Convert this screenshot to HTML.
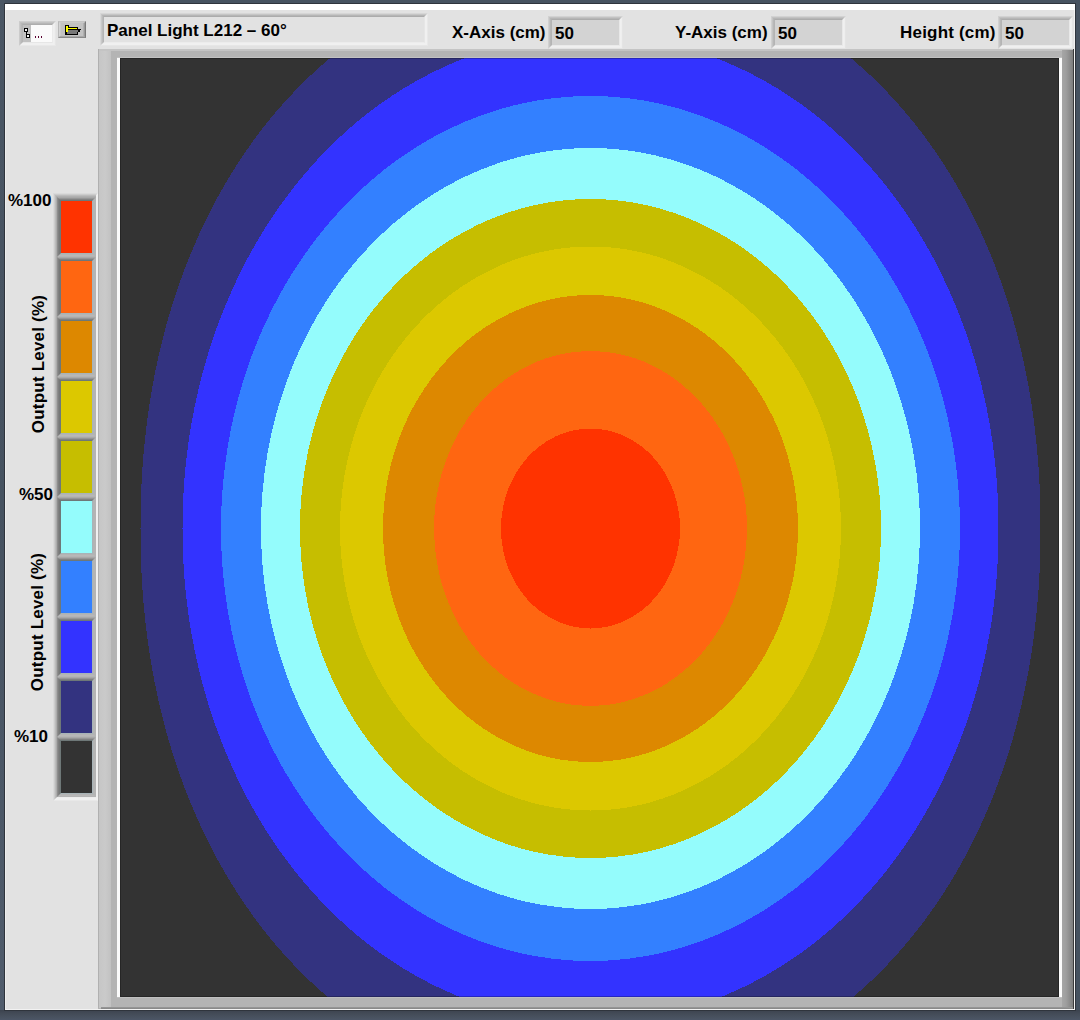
<!DOCTYPE html>
<html><head><meta charset="utf-8">
<style>
html,body{margin:0;padding:0;}
body{width:1080px;height:1020px;position:relative;overflow:hidden;background:#465260;font-family:"Liberation Sans",sans-serif;}
.a{position:absolute;}
.t{position:absolute;font-weight:bold;font-size:17px;line-height:20px;white-space:nowrap;color:#000;}
</style></head><body>
<div class="a" style="left:0;top:0;width:1080px;height:1020px;background:#465260;"></div>
<div class="a" style="left:0;top:1010px;width:1080px;height:10px;background:linear-gradient(180deg,#3c434e 0,#444c58 4px,#4c5666 10px);"></div>
<div class="a" style="left:0;top:0;width:5px;height:1010px;background:linear-gradient(180deg,#4a5664 0,#465260 50%,#505c6c 100%);"></div>
<div class="a" style="left:4px;top:3px;width:1072px;height:1008px;background:#2f343c;"></div>
<div class="a" style="left:5px;top:4px;width:1070px;height:1006px;background:#e2e2e2;"></div>
<div class="a" style="left:5px;top:4px;width:1070px;height:6px;background:#ffffff;"></div>
<div class="a" style="left:5px;top:10px;width:1px;height:999px;background:#ededed;"></div>
<div class="a" style="left:5px;top:1009px;width:1070px;height:1px;background:#f2f2f2;"></div>
<div class="a" style="box-sizing:border-box;left:19px;top:21px;width:37px;height:25px;border-top:1px solid #cdcdcd;border-left:1px solid #cbcbcb;border-right:1px solid #e6e6e6;border-bottom:1px solid #e8e8e8;"></div>
<div class="a" style="box-sizing:border-box;left:20px;top:22px;width:35px;height:23px;border-top:1px solid #c2c2c2;border-left:1px solid #c0c0c0;border-right:1px solid #eeeeee;border-bottom:1px solid #f0f0f0;"></div>
<div class="a" style="box-sizing:border-box;left:21px;top:23px;width:33px;height:21px;border-top:1px solid #b6b6b6;border-left:1px solid #b8b8b8;border-right:1px solid #f0f0f0;border-bottom:1px solid #f0f0f0;"></div>
<div class="a" style="box-sizing:border-box;left:22px;top:24px;width:31px;height:19px;border-top:1px solid #adadad;border-left:1px solid #b4b4b4;border-right:1px solid #ebebeb;border-bottom:1px solid #e6e6e6;"></div>
<div class="a" style="left:23px;top:25px;width:29px;height:17px;background:#fafafa;"></div>
<div class="a" style="left:23px;top:25px;width:8px;height:17px;background:#c0c0c0;"></div>
<svg class="a" style="left:0;top:0" width="100" height="60" viewBox="0 0 100 60" shape-rendering="crispEdges">
 <rect x="24.5" y="28.5" width="3" height="3" fill="#f4f4f4" stroke="#000" stroke-width="1"/>
 <rect x="26.5" y="34.5" width="3" height="3" fill="#f4f4f4" stroke="#000" stroke-width="1"/>
 <rect x="26" y="32" width="1" height="2" fill="#000"/>
 <rect x="35" y="36" width="1" height="2" fill="#5a0030"/>
 <rect x="38" y="36" width="1" height="2" fill="#5a0030"/>
 <rect x="41" y="36" width="1" height="2" fill="#5a0030"/>
</svg>
<div class="a" style="box-sizing:border-box;left:58px;top:21px;width:28px;height:17px;border-top:1px solid #c4c4c4;border-left:1px solid #b8b8b8;border-right:1px solid #7a7a7a;border-bottom:1px solid #8a8a8a;"></div>
<div class="a" style="box-sizing:border-box;left:59px;top:22px;width:26px;height:15px;border-top:1px solid #c8c8c8;border-left:1px solid #d4d4d4;border-right:1px solid #9a9a9a;border-bottom:1px solid #a8a8a8;"></div>
<div class="a" style="box-sizing:border-box;left:60px;top:23px;width:24px;height:13px;border-top:0 solid transparent;border-left:1px solid #cacaca;border-right:1px solid #b0b0b0;border-bottom:0 solid transparent;"></div>
<div class="a" style="left:61px;top:23px;width:22px;height:13px;background:#c2c2c2;"></div>
<svg class="a" style="left:0;top:0" width="100" height="60" viewBox="0 0 100 60" shape-rendering="crispEdges">
<rect x="65" y="25" width="4" height="1" fill="#000"/>
<rect x="65" y="26" width="1" height="1" fill="#000"/>
<rect x="66" y="26" width="2" height="1" fill="#ffff00"/>
<rect x="68" y="26" width="1" height="1" fill="#000"/>
<rect x="65" y="27" width="1" height="1" fill="#000"/>
<rect x="66" y="27" width="2" height="1" fill="#ffff00"/>
<rect x="68" y="27" width="10" height="1" fill="#000"/>
<rect x="65" y="28" width="1" height="1" fill="#000"/>
<rect x="66" y="28" width="11" height="1" fill="#ffff00"/>
<rect x="77" y="28" width="1" height="1" fill="#000"/>
<rect x="65" y="29" width="1" height="1" fill="#000"/>
<rect x="66" y="29" width="2" height="1" fill="#ffff00"/>
<rect x="68" y="29" width="13" height="1" fill="#000"/>
<rect x="65" y="30" width="1" height="1" fill="#000"/>
<rect x="66" y="30" width="2" height="1" fill="#ffff00"/>
<rect x="68" y="30" width="10" height="1" fill="#787878"/>
<rect x="78" y="30" width="2" height="1" fill="#000"/>
<rect x="65" y="31" width="1" height="1" fill="#000"/>
<rect x="66" y="31" width="2" height="1" fill="#ffff00"/>
<rect x="68" y="31" width="10" height="1" fill="#787878"/>
<rect x="78" y="31" width="2" height="1" fill="#000"/>
<rect x="65" y="32" width="2" height="1" fill="#000"/>
<rect x="67" y="32" width="10" height="1" fill="#787878"/>
<rect x="77" y="32" width="1" height="1" fill="#000"/>
<rect x="65" y="33" width="2" height="1" fill="#000"/>
<rect x="67" y="33" width="10" height="1" fill="#787878"/>
<rect x="77" y="33" width="1" height="1" fill="#000"/>
<rect x="65" y="34" width="13" height="1" fill="#000"/>
</svg>
<div class="a" style="box-sizing:border-box;left:100px;top:13px;width:328px;height:33px;border-top:1px solid #d6d6d6;border-left:1px solid #d8d8d8;border-right:1px solid #e8e8e8;border-bottom:1px solid #e6e6e6;"></div>
<div class="a" style="box-sizing:border-box;left:101px;top:14px;width:326px;height:31px;border-top:1px solid #c6c6c6;border-left:1px solid #c8c8c8;border-right:1px solid #f0f0f0;border-bottom:1px solid #f0f0f0;"></div>
<div class="a" style="box-sizing:border-box;left:102px;top:15px;width:324px;height:29px;border-top:1px solid #b6b6b6;border-left:1px solid #bcbcbc;border-right:1px solid #f0f0f0;border-bottom:1px solid #f0f0f0;"></div>
<div class="a" style="box-sizing:border-box;left:103px;top:16px;width:322px;height:27px;border-top:1px solid #acacac;border-left:1px solid #b4b4b4;border-right:1px solid #e6e6e6;border-bottom:1px solid #ececec;"></div>
<div class="a" style="left:104px;top:17px;width:320px;height:25px;background:#e2e2e2;"></div>
<div class="t" style="left:107px;top:21px;">Panel Light L212 – 60°</div>
<div class="t" style="left:452px;top:23px;">X-Axis (cm)</div>
<div class="a" style="box-sizing:border-box;left:548px;top:16px;width:75px;height:33px;border-top:1px solid #d2d2d2;border-left:1px solid #d0d0d0;border-right:1px solid #e4e4e4;border-bottom:1px solid #e4e4e4;"></div>
<div class="a" style="box-sizing:border-box;left:549px;top:17px;width:73px;height:31px;border-top:1px solid #c2c2c2;border-left:1px solid #c4c4c4;border-right:1px solid #eeeeee;border-bottom:1px solid #eeeeee;"></div>
<div class="a" style="box-sizing:border-box;left:550px;top:18px;width:71px;height:29px;border-top:1px solid #b6b6b6;border-left:1px solid #b8b8b8;border-right:1px solid #f0f0f0;border-bottom:1px solid #f0f0f0;"></div>
<div class="a" style="box-sizing:border-box;left:551px;top:19px;width:69px;height:27px;border-top:1px solid #acacac;border-left:1px solid #b4b4b4;border-right:1px solid #e8e8e8;border-bottom:1px solid #eaeaea;"></div>
<div class="a" style="left:552px;top:20px;width:67px;height:25px;background:#d3d3d3;"></div>
<div class="t" style="left:555px;top:24px;">50</div>
<div class="t" style="left:675px;top:23px;">Y-Axis (cm)</div>
<div class="a" style="box-sizing:border-box;left:771px;top:16px;width:75px;height:33px;border-top:1px solid #d2d2d2;border-left:1px solid #d0d0d0;border-right:1px solid #e4e4e4;border-bottom:1px solid #e4e4e4;"></div>
<div class="a" style="box-sizing:border-box;left:772px;top:17px;width:73px;height:31px;border-top:1px solid #c2c2c2;border-left:1px solid #c4c4c4;border-right:1px solid #eeeeee;border-bottom:1px solid #eeeeee;"></div>
<div class="a" style="box-sizing:border-box;left:773px;top:18px;width:71px;height:29px;border-top:1px solid #b6b6b6;border-left:1px solid #b8b8b8;border-right:1px solid #f0f0f0;border-bottom:1px solid #f0f0f0;"></div>
<div class="a" style="box-sizing:border-box;left:774px;top:19px;width:69px;height:27px;border-top:1px solid #acacac;border-left:1px solid #b4b4b4;border-right:1px solid #e8e8e8;border-bottom:1px solid #eaeaea;"></div>
<div class="a" style="left:775px;top:20px;width:67px;height:25px;background:#d3d3d3;"></div>
<div class="t" style="left:778px;top:24px;">50</div>
<div class="t" style="left:900px;top:23px;letter-spacing:0.2px;">Height (cm)</div>
<div class="a" style="box-sizing:border-box;left:998px;top:16px;width:75px;height:33px;border-top:1px solid #d2d2d2;border-left:1px solid #d0d0d0;border-right:1px solid #e4e4e4;border-bottom:1px solid #e4e4e4;"></div>
<div class="a" style="box-sizing:border-box;left:999px;top:17px;width:73px;height:31px;border-top:1px solid #c2c2c2;border-left:1px solid #c4c4c4;border-right:1px solid #eeeeee;border-bottom:1px solid #eeeeee;"></div>
<div class="a" style="box-sizing:border-box;left:1000px;top:18px;width:71px;height:29px;border-top:1px solid #b6b6b6;border-left:1px solid #b8b8b8;border-right:1px solid #f0f0f0;border-bottom:1px solid #f0f0f0;"></div>
<div class="a" style="box-sizing:border-box;left:1001px;top:19px;width:69px;height:27px;border-top:1px solid #acacac;border-left:1px solid #b4b4b4;border-right:1px solid #e8e8e8;border-bottom:1px solid #eaeaea;"></div>
<div class="a" style="left:1002px;top:20px;width:67px;height:25px;background:#d3d3d3;"></div>
<div class="t" style="left:1005px;top:24px;">50</div>
<div class="a" style="left:98px;top:49px;width:976px;height:960px;background:#b4b4b4;"></div>
<div class="a" style="left:98px;top:49px;width:975px;height:2px;background:#c4c4c4;"></div>
<div class="a" style="left:98px;top:49px;width:1px;height:959px;background:#b0b0b0;"></div>
<div class="a" style="left:99px;top:51px;width:12px;height:957px;background:linear-gradient(90deg,#c6c6c6 0,#cacaca 6px,#c2c2c2 12px);"></div>
<div class="a" style="left:1062px;top:50px;width:11px;height:958px;background:linear-gradient(90deg,#a6a6a6 0,#9e9e9e 4px,#7e7e7e 11px);"></div>
<div class="a" style="left:1073px;top:49px;width:1px;height:960px;background:#3c3c3c;"></div>
<div class="a" style="left:1074px;top:10px;width:1px;height:1000px;background:#f2f2f2;"></div>
<div class="a" style="left:101px;top:1007px;width:972px;height:2px;background:linear-gradient(180deg,#9a9a9a,#848484);"></div>
<div class="a" style="left:117px;top:58px;width:3px;height:939px;background:#fbfbfb;"></div>
<div class="a" style="left:1059px;top:58px;width:3px;height:939px;background:#fbfbfb;"></div>
<svg class="a" style="left:120px;top:58px" width="939" height="939" viewBox="120 58 939 939" shape-rendering="crispEdges">
<rect x="120" y="58" width="939" height="939" fill="#333333"/>
<path d="M1040.5,528.5 L1040.4,540.5 L1040.2,551.7 L1039.9,562.7 L1039.5,573.4 L1038.9,584.0 L1038.2,594.4 L1037.3,604.8 L1036.3,615.0 L1035.2,625.2 L1034.0,635.3 L1032.6,645.3 L1031.2,655.2 L1029.5,665.1 L1027.8,674.8 L1025.9,684.5 L1023.9,694.1 L1021.8,703.7 L1019.5,713.1 L1017.2,722.5 L1014.7,731.8 L1012.1,741.0 L1009.3,750.2 L1006.4,759.2 L1003.5,768.2 L1000.3,777.1 L997.1,785.9 L993.8,794.6 L990.3,803.2 L986.7,811.7 L983.0,820.2 L979.2,828.5 L975.3,836.7 L971.2,844.8 L967.1,852.9 L962.8,860.8 L958.4,868.6 L953.9,876.3 L949.3,883.9 L944.6,891.4 L939.8,898.8 L934.9,906.0 L929.9,913.2 L924.8,920.2 L919.6,927.1 L914.2,933.9 L908.8,940.6 L903.3,947.1 L897.7,953.5 L892.0,959.8 L886.2,965.9 L880.3,972.0 L874.3,977.9 L868.3,983.6 L862.1,989.2 L855.9,994.7 L849.5,1000.1 L843.1,1005.3 L836.6,1010.3 L830.1,1015.2 L823.4,1020.0 L816.7,1024.7 L809.9,1029.1 L803.0,1033.5 L796.1,1037.7 L789.0,1041.7 L781.9,1045.6 L774.8,1049.4 L767.5,1052.9 L760.2,1056.4 L752.9,1059.7 L745.4,1062.8 L737.9,1065.8 L730.4,1068.6 L722.8,1071.2 L715.1,1073.7 L707.4,1076.1 L699.5,1078.3 L691.7,1080.3 L683.8,1082.2 L675.8,1083.9 L667.7,1085.4 L659.6,1086.8 L651.4,1088.0 L643.1,1089.1 L634.8,1090.0 L626.3,1090.7 L617.8,1091.3 L609.1,1091.7 L600.1,1091.9 L590.5,1092.0 L580.9,1091.9 L571.9,1091.7 L563.2,1091.3 L554.7,1090.7 L546.2,1090.0 L537.9,1089.1 L529.6,1088.0 L521.4,1086.8 L513.3,1085.4 L505.2,1083.9 L497.2,1082.2 L489.3,1080.3 L481.5,1078.3 L473.6,1076.1 L465.9,1073.7 L458.2,1071.2 L450.6,1068.6 L443.1,1065.8 L435.6,1062.8 L428.1,1059.7 L420.8,1056.4 L413.5,1052.9 L406.2,1049.4 L399.1,1045.6 L392.0,1041.7 L384.9,1037.7 L378.0,1033.5 L371.1,1029.1 L364.3,1024.7 L357.6,1020.0 L350.9,1015.2 L344.4,1010.3 L337.9,1005.3 L331.5,1000.1 L325.1,994.7 L318.9,989.2 L312.7,983.6 L306.7,977.9 L300.7,972.0 L294.8,965.9 L289.0,959.8 L283.3,953.5 L277.7,947.1 L272.2,940.6 L266.8,933.9 L261.4,927.1 L256.2,920.2 L251.1,913.2 L246.1,906.0 L241.2,898.8 L236.4,891.4 L231.7,883.9 L227.1,876.3 L222.6,868.6 L218.2,860.8 L213.9,852.9 L209.8,844.8 L205.7,836.7 L201.8,828.5 L198.0,820.2 L194.3,811.7 L190.7,803.2 L187.2,794.6 L183.9,785.9 L180.7,777.1 L177.5,768.2 L174.6,759.2 L171.7,750.2 L168.9,741.0 L166.3,731.8 L163.8,722.5 L161.5,713.1 L159.2,703.7 L157.1,694.1 L155.1,684.5 L153.2,674.8 L151.5,665.1 L149.8,655.2 L148.4,645.3 L147.0,635.3 L145.8,625.2 L144.7,615.0 L143.7,604.8 L142.8,594.4 L142.1,584.0 L141.5,573.4 L141.1,562.7 L140.8,551.7 L140.6,540.5 L140.5,528.5 L140.6,516.5 L140.8,505.3 L141.1,494.3 L141.5,483.6 L142.1,473.0 L142.8,462.6 L143.7,452.2 L144.7,442.0 L145.8,431.8 L147.0,421.7 L148.4,411.7 L149.8,401.8 L151.5,391.9 L153.2,382.2 L155.1,372.5 L157.1,362.9 L159.2,353.3 L161.5,343.9 L163.8,334.5 L166.3,325.2 L168.9,316.0 L171.7,306.8 L174.6,297.8 L177.5,288.8 L180.7,279.9 L183.9,271.1 L187.2,262.4 L190.7,253.8 L194.3,245.3 L198.0,236.8 L201.8,228.5 L205.7,220.3 L209.8,212.2 L213.9,204.1 L218.2,196.2 L222.6,188.4 L227.1,180.7 L231.7,173.1 L236.4,165.6 L241.2,158.2 L246.1,151.0 L251.1,143.8 L256.2,136.8 L261.4,129.9 L266.8,123.1 L272.2,116.4 L277.7,109.9 L283.3,103.5 L289.0,97.2 L294.8,91.1 L300.7,85.0 L306.7,79.1 L312.7,73.4 L318.9,67.8 L325.1,62.3 L331.5,56.9 L337.9,51.7 L344.4,46.7 L350.9,41.8 L357.6,37.0 L364.3,32.3 L371.1,27.9 L378.0,23.5 L384.9,19.3 L392.0,15.3 L399.1,11.4 L406.2,7.6 L413.5,4.1 L420.8,0.6 L428.1,-2.7 L435.6,-5.8 L443.1,-8.8 L450.6,-11.6 L458.2,-14.2 L465.9,-16.7 L473.6,-19.1 L481.5,-21.3 L489.3,-23.3 L497.2,-25.2 L505.2,-26.9 L513.3,-28.4 L521.4,-29.8 L529.6,-31.0 L537.9,-32.1 L546.2,-33.0 L554.7,-33.7 L563.2,-34.3 L571.9,-34.7 L580.9,-34.9 L590.5,-35.0 L600.1,-34.9 L609.1,-34.7 L617.8,-34.3 L626.3,-33.7 L634.8,-33.0 L643.1,-32.1 L651.4,-31.0 L659.6,-29.8 L667.7,-28.4 L675.8,-26.9 L683.8,-25.2 L691.7,-23.3 L699.5,-21.3 L707.4,-19.1 L715.1,-16.7 L722.8,-14.2 L730.4,-11.6 L737.9,-8.8 L745.4,-5.8 L752.9,-2.7 L760.2,0.6 L767.5,4.1 L774.8,7.6 L781.9,11.4 L789.0,15.3 L796.1,19.3 L803.0,23.5 L809.9,27.9 L816.7,32.3 L823.4,37.0 L830.1,41.8 L836.6,46.7 L843.1,51.7 L849.5,56.9 L855.9,62.3 L862.1,67.8 L868.3,73.4 L874.3,79.1 L880.3,85.0 L886.2,91.1 L892.0,97.2 L897.7,103.5 L903.3,109.9 L908.8,116.4 L914.2,123.1 L919.6,129.9 L924.8,136.8 L929.9,143.8 L934.9,151.0 L939.8,158.2 L944.6,165.6 L949.3,173.1 L953.9,180.7 L958.4,188.4 L962.8,196.2 L967.1,204.1 L971.2,212.2 L975.3,220.3 L979.2,228.5 L983.0,236.8 L986.7,245.3 L990.3,253.8 L993.8,262.4 L997.1,271.1 L1000.3,279.9 L1003.5,288.8 L1006.4,297.8 L1009.3,306.8 L1012.1,316.0 L1014.7,325.2 L1017.2,334.5 L1019.5,343.9 L1021.8,353.3 L1023.9,362.9 L1025.9,372.5 L1027.8,382.2 L1029.5,391.9 L1031.2,401.8 L1032.6,411.7 L1034.0,421.7 L1035.2,431.8 L1036.3,442.0 L1037.3,452.2 L1038.2,462.6 L1038.9,473.0 L1039.5,483.6 L1039.9,494.3 L1040.2,505.3 L1040.4,516.5Z" fill="#333380"/>
<path d="M998.5,528.5 L998.4,537.5 L998.3,546.3 L997.9,555.1 L997.5,563.8 L997.0,572.6 L996.3,581.3 L995.5,589.9 L994.6,598.5 L993.5,607.1 L992.4,615.7 L991.1,624.2 L989.7,632.7 L988.1,641.2 L986.5,649.6 L984.7,657.9 L982.8,666.3 L980.8,674.6 L978.7,682.8 L976.5,691.0 L974.1,699.1 L971.7,707.2 L969.1,715.2 L966.4,723.1 L963.6,731.0 L960.6,738.8 L957.6,746.6 L954.4,754.3 L951.2,761.9 L947.8,769.5 L944.3,776.9 L940.8,784.3 L937.1,791.7 L933.3,798.9 L929.4,806.1 L925.4,813.1 L921.3,820.1 L917.1,827.0 L912.8,833.8 L908.4,840.5 L903.9,847.1 L899.3,853.6 L894.6,860.0 L889.8,866.3 L884.9,872.6 L880.0,878.7 L874.9,884.7 L869.8,890.5 L864.6,896.3 L859.3,902.0 L853.9,907.5 L848.4,913.0 L842.9,918.3 L837.3,923.5 L831.6,928.6 L825.8,933.6 L820.0,938.4 L814.1,943.1 L808.1,947.7 L802.0,952.2 L795.9,956.5 L789.7,960.7 L783.5,964.8 L777.2,968.7 L770.8,972.5 L764.4,976.2 L757.9,979.7 L751.4,983.1 L744.8,986.4 L738.2,989.5 L731.5,992.5 L724.8,995.4 L718.1,998.1 L711.2,1000.6 L704.4,1003.1 L697.5,1005.3 L690.6,1007.5 L683.6,1009.5 L676.7,1011.3 L669.6,1013.0 L662.6,1014.6 L655.5,1016.0 L648.4,1017.2 L641.3,1018.4 L634.1,1019.3 L626.9,1020.1 L619.7,1020.8 L612.5,1021.3 L605.2,1021.7 L597.9,1021.9 L590.5,1022.0 L583.1,1021.9 L575.8,1021.7 L568.5,1021.3 L561.3,1020.8 L554.1,1020.1 L546.9,1019.3 L539.7,1018.4 L532.6,1017.2 L525.5,1016.0 L518.4,1014.6 L511.4,1013.0 L504.3,1011.3 L497.4,1009.5 L490.4,1007.5 L483.5,1005.3 L476.6,1003.1 L469.8,1000.6 L462.9,998.1 L456.2,995.4 L449.5,992.5 L442.8,989.5 L436.2,986.4 L429.6,983.1 L423.1,979.7 L416.6,976.2 L410.2,972.5 L403.8,968.7 L397.5,964.8 L391.3,960.7 L385.1,956.5 L379.0,952.2 L372.9,947.7 L366.9,943.1 L361.0,938.4 L355.2,933.6 L349.4,928.6 L343.7,923.5 L338.1,918.3 L332.6,913.0 L327.1,907.5 L321.7,902.0 L316.4,896.3 L311.2,890.5 L306.1,884.7 L301.0,878.7 L296.1,872.6 L291.2,866.3 L286.4,860.0 L281.7,853.6 L277.1,847.1 L272.6,840.5 L268.2,833.8 L263.9,827.0 L259.7,820.1 L255.6,813.1 L251.6,806.1 L247.7,798.9 L243.9,791.7 L240.2,784.3 L236.7,776.9 L233.2,769.5 L229.8,761.9 L226.6,754.3 L223.4,746.6 L220.4,738.8 L217.4,731.0 L214.6,723.1 L211.9,715.2 L209.3,707.2 L206.9,699.1 L204.5,691.0 L202.3,682.8 L200.2,674.6 L198.2,666.3 L196.3,657.9 L194.5,649.6 L192.9,641.2 L191.3,632.7 L189.9,624.2 L188.6,615.7 L187.5,607.1 L186.4,598.5 L185.5,589.9 L184.7,581.3 L184.0,572.6 L183.5,563.8 L183.1,555.1 L182.7,546.3 L182.6,537.5 L182.5,528.5 L182.6,519.5 L182.7,510.7 L183.1,501.9 L183.5,493.2 L184.0,484.4 L184.7,475.7 L185.5,467.1 L186.4,458.5 L187.5,449.9 L188.6,441.3 L189.9,432.8 L191.3,424.3 L192.9,415.8 L194.5,407.4 L196.3,399.1 L198.2,390.7 L200.2,382.4 L202.3,374.2 L204.5,366.0 L206.9,357.9 L209.3,349.8 L211.9,341.8 L214.6,333.9 L217.4,326.0 L220.4,318.2 L223.4,310.4 L226.6,302.7 L229.8,295.1 L233.2,287.5 L236.7,280.1 L240.2,272.7 L243.9,265.3 L247.7,258.1 L251.6,250.9 L255.6,243.9 L259.7,236.9 L263.9,230.0 L268.2,223.2 L272.6,216.5 L277.1,209.9 L281.7,203.4 L286.4,197.0 L291.2,190.7 L296.1,184.4 L301.0,178.3 L306.1,172.3 L311.2,166.5 L316.4,160.7 L321.7,155.0 L327.1,149.5 L332.6,144.0 L338.1,138.7 L343.7,133.5 L349.4,128.4 L355.2,123.4 L361.0,118.6 L366.9,113.9 L372.9,109.3 L379.0,104.8 L385.1,100.5 L391.3,96.3 L397.5,92.2 L403.8,88.3 L410.2,84.5 L416.6,80.8 L423.1,77.3 L429.6,73.9 L436.2,70.6 L442.8,67.5 L449.5,64.5 L456.2,61.6 L462.9,58.9 L469.8,56.4 L476.6,53.9 L483.5,51.7 L490.4,49.5 L497.4,47.5 L504.3,45.7 L511.4,44.0 L518.4,42.4 L525.5,41.0 L532.6,39.8 L539.7,38.6 L546.9,37.7 L554.1,36.9 L561.3,36.2 L568.5,35.7 L575.8,35.3 L583.1,35.1 L590.5,35.0 L597.9,35.1 L605.2,35.3 L612.5,35.7 L619.7,36.2 L626.9,36.9 L634.1,37.7 L641.3,38.6 L648.4,39.8 L655.5,41.0 L662.6,42.4 L669.6,44.0 L676.7,45.7 L683.6,47.5 L690.6,49.5 L697.5,51.7 L704.4,53.9 L711.2,56.4 L718.1,58.9 L724.8,61.6 L731.5,64.5 L738.2,67.5 L744.8,70.6 L751.4,73.9 L757.9,77.3 L764.4,80.8 L770.8,84.5 L777.2,88.3 L783.5,92.2 L789.7,96.3 L795.9,100.5 L802.0,104.8 L808.1,109.3 L814.1,113.9 L820.0,118.6 L825.8,123.4 L831.6,128.4 L837.3,133.5 L842.9,138.7 L848.4,144.0 L853.9,149.5 L859.3,155.0 L864.6,160.7 L869.8,166.5 L874.9,172.3 L880.0,178.3 L884.9,184.4 L889.8,190.7 L894.6,197.0 L899.3,203.4 L903.9,209.9 L908.4,216.5 L912.8,223.2 L917.1,230.0 L921.3,236.9 L925.4,243.9 L929.4,250.9 L933.3,258.1 L937.1,265.3 L940.8,272.7 L944.3,280.1 L947.8,287.5 L951.2,295.1 L954.4,302.7 L957.6,310.4 L960.6,318.2 L963.6,326.0 L966.4,333.9 L969.1,341.8 L971.7,349.8 L974.1,357.9 L976.5,366.0 L978.7,374.2 L980.8,382.4 L982.8,390.7 L984.7,399.1 L986.5,407.4 L988.1,415.8 L989.7,424.3 L991.1,432.8 L992.4,441.3 L993.5,449.9 L994.6,458.5 L995.5,467.1 L996.3,475.7 L997.0,484.4 L997.5,493.2 L997.9,501.9 L998.3,510.7 L998.4,519.5Z" fill="#3333ff"/>
<ellipse cx="590.5" cy="528.5" rx="369.5" ry="432.5" fill="#3380ff"/>
<ellipse cx="590.5" cy="528.5" rx="329.5" ry="380.5" fill="#94fcfc"/>
<ellipse cx="590.5" cy="528.5" rx="290.5" ry="329.5" fill="#c6be00"/>
<ellipse cx="590.5" cy="528.5" rx="250.5" ry="282.0" fill="#dcc800"/>
<ellipse cx="590.5" cy="528.5" rx="207.5" ry="233.5" fill="#dd8800"/>
<ellipse cx="590.5" cy="528.5" rx="156.5" ry="177.5" fill="#ff6611"/>
<ellipse cx="590.5" cy="528.5" rx="89.5" ry="100.0" fill="#ff3300"/>
</svg>
<div class="a" style="box-sizing:border-box;left:120px;top:58px;width:939px;height:939px;border:1px solid rgba(0,0,0,0.25);"></div>
<div class="a" style="left:117px;top:57px;width:945px;height:1px;background:#c2c2c2;"></div>
<div class="a" style="left:117px;top:997px;width:945px;height:1px;background:#c0c0c0;"></div>
<div class="a" style="box-sizing:border-box;left:53px;top:193px;width:45px;height:608px;border-top:1px solid #dadada;border-left:1px solid #dadada;border-right:1px solid #f0f0f0;border-bottom:1px solid #e8e8e8;"></div>
<div class="a" style="box-sizing:border-box;left:54px;top:194px;width:43px;height:606px;border-top:1px solid #cccccc;border-left:1px solid #cccccc;border-right:1px solid #f0f0f0;border-bottom:1px solid #f0f0f0;"></div>
<div class="a" style="box-sizing:border-box;left:55px;top:195px;width:41px;height:604px;border-top:1px solid #bcbcbc;border-left:1px solid #bcbcbc;border-right:0 solid transparent;border-bottom:1px solid #f0f0f0;"></div>
<div class="a" style="box-sizing:border-box;left:56px;top:196px;width:40px;height:602px;border-top:1px solid #b0b0b0;border-left:1px solid #acacac;border-right:0 solid transparent;border-bottom:1px solid #ececec;"></div>
<div class="a" style="left:57px;top:197px;width:39px;height:600px;background:#b4b4b4;"></div>
<div class="a" style="box-sizing:border-box;left:57px;top:197px;width:39px;height:60px;border-top:1px solid #a8a8a8;border-left:1px solid #8e8e8e;border-right:1px solid #b4b4b4;border-bottom:1px solid #b4b4b4;"></div>
<div class="a" style="box-sizing:border-box;left:58px;top:198px;width:37px;height:58px;border-top:1px solid #969696;border-left:1px solid #808080;border-right:1px solid #b4b4b4;border-bottom:1px solid #b8b8b8;"></div>
<div class="a" style="box-sizing:border-box;left:59px;top:199px;width:35px;height:56px;border-top:1px solid #828282;border-left:1px solid #767878;border-right:1px solid #b2b4b4;border-bottom:1px solid #b4b4b4;"></div>
<div class="a" style="box-sizing:border-box;left:60px;top:200px;width:33px;height:54px;border-top:1px solid #6e7878;border-left:1px solid #6e7878;border-right:1px solid #a8b4b8;border-bottom:1px solid #a8b4b8;"></div>
<div class="a" style="left:61px;top:201px;width:31px;height:52px;background:#ff3300;"></div>
<div class="a" style="box-sizing:border-box;left:57px;top:257px;width:39px;height:60px;border-top:1px solid #a8a8a8;border-left:1px solid #8e8e8e;border-right:1px solid #b4b4b4;border-bottom:1px solid #b4b4b4;"></div>
<div class="a" style="box-sizing:border-box;left:58px;top:258px;width:37px;height:58px;border-top:1px solid #969696;border-left:1px solid #808080;border-right:1px solid #b4b4b4;border-bottom:1px solid #b8b8b8;"></div>
<div class="a" style="box-sizing:border-box;left:59px;top:259px;width:35px;height:56px;border-top:1px solid #828282;border-left:1px solid #767878;border-right:1px solid #b2b4b4;border-bottom:1px solid #b4b4b4;"></div>
<div class="a" style="box-sizing:border-box;left:60px;top:260px;width:33px;height:54px;border-top:1px solid #6e7878;border-left:1px solid #6e7878;border-right:1px solid #a8b4b8;border-bottom:1px solid #a8b4b8;"></div>
<div class="a" style="left:61px;top:261px;width:31px;height:52px;background:#ff6611;"></div>
<div class="a" style="box-sizing:border-box;left:57px;top:317px;width:39px;height:60px;border-top:1px solid #a8a8a8;border-left:1px solid #8e8e8e;border-right:1px solid #b4b4b4;border-bottom:1px solid #b4b4b4;"></div>
<div class="a" style="box-sizing:border-box;left:58px;top:318px;width:37px;height:58px;border-top:1px solid #969696;border-left:1px solid #808080;border-right:1px solid #b4b4b4;border-bottom:1px solid #b8b8b8;"></div>
<div class="a" style="box-sizing:border-box;left:59px;top:319px;width:35px;height:56px;border-top:1px solid #828282;border-left:1px solid #767878;border-right:1px solid #b2b4b4;border-bottom:1px solid #b4b4b4;"></div>
<div class="a" style="box-sizing:border-box;left:60px;top:320px;width:33px;height:54px;border-top:1px solid #6e7878;border-left:1px solid #6e7878;border-right:1px solid #a8b4b8;border-bottom:1px solid #a8b4b8;"></div>
<div class="a" style="left:61px;top:321px;width:31px;height:52px;background:#dd8800;"></div>
<div class="a" style="box-sizing:border-box;left:57px;top:377px;width:39px;height:60px;border-top:1px solid #a8a8a8;border-left:1px solid #8e8e8e;border-right:1px solid #b4b4b4;border-bottom:1px solid #b4b4b4;"></div>
<div class="a" style="box-sizing:border-box;left:58px;top:378px;width:37px;height:58px;border-top:1px solid #969696;border-left:1px solid #808080;border-right:1px solid #b4b4b4;border-bottom:1px solid #b8b8b8;"></div>
<div class="a" style="box-sizing:border-box;left:59px;top:379px;width:35px;height:56px;border-top:1px solid #828282;border-left:1px solid #767878;border-right:1px solid #b2b4b4;border-bottom:1px solid #b4b4b4;"></div>
<div class="a" style="box-sizing:border-box;left:60px;top:380px;width:33px;height:54px;border-top:1px solid #6e7878;border-left:1px solid #6e7878;border-right:1px solid #a8b4b8;border-bottom:1px solid #a8b4b8;"></div>
<div class="a" style="left:61px;top:381px;width:31px;height:52px;background:#dcc800;"></div>
<div class="a" style="box-sizing:border-box;left:57px;top:437px;width:39px;height:60px;border-top:1px solid #a8a8a8;border-left:1px solid #8e8e8e;border-right:1px solid #b4b4b4;border-bottom:1px solid #b4b4b4;"></div>
<div class="a" style="box-sizing:border-box;left:58px;top:438px;width:37px;height:58px;border-top:1px solid #969696;border-left:1px solid #808080;border-right:1px solid #b4b4b4;border-bottom:1px solid #b8b8b8;"></div>
<div class="a" style="box-sizing:border-box;left:59px;top:439px;width:35px;height:56px;border-top:1px solid #828282;border-left:1px solid #767878;border-right:1px solid #b2b4b4;border-bottom:1px solid #b4b4b4;"></div>
<div class="a" style="box-sizing:border-box;left:60px;top:440px;width:33px;height:54px;border-top:1px solid #6e7878;border-left:1px solid #6e7878;border-right:1px solid #a8b4b8;border-bottom:1px solid #a8b4b8;"></div>
<div class="a" style="left:61px;top:441px;width:31px;height:52px;background:#c6be00;"></div>
<div class="a" style="box-sizing:border-box;left:57px;top:497px;width:39px;height:60px;border-top:1px solid #a8a8a8;border-left:1px solid #8e8e8e;border-right:1px solid #b4b4b4;border-bottom:1px solid #b4b4b4;"></div>
<div class="a" style="box-sizing:border-box;left:58px;top:498px;width:37px;height:58px;border-top:1px solid #969696;border-left:1px solid #808080;border-right:1px solid #b4b4b4;border-bottom:1px solid #b8b8b8;"></div>
<div class="a" style="box-sizing:border-box;left:59px;top:499px;width:35px;height:56px;border-top:1px solid #828282;border-left:1px solid #767878;border-right:1px solid #b2b4b4;border-bottom:1px solid #b4b4b4;"></div>
<div class="a" style="box-sizing:border-box;left:60px;top:500px;width:33px;height:54px;border-top:1px solid #6e7878;border-left:1px solid #6e7878;border-right:1px solid #a8b4b8;border-bottom:1px solid #a8b4b8;"></div>
<div class="a" style="left:61px;top:501px;width:31px;height:52px;background:#94fcfc;"></div>
<div class="a" style="box-sizing:border-box;left:57px;top:557px;width:39px;height:60px;border-top:1px solid #a8a8a8;border-left:1px solid #8e8e8e;border-right:1px solid #b4b4b4;border-bottom:1px solid #b4b4b4;"></div>
<div class="a" style="box-sizing:border-box;left:58px;top:558px;width:37px;height:58px;border-top:1px solid #969696;border-left:1px solid #808080;border-right:1px solid #b4b4b4;border-bottom:1px solid #b8b8b8;"></div>
<div class="a" style="box-sizing:border-box;left:59px;top:559px;width:35px;height:56px;border-top:1px solid #828282;border-left:1px solid #767878;border-right:1px solid #b2b4b4;border-bottom:1px solid #b4b4b4;"></div>
<div class="a" style="box-sizing:border-box;left:60px;top:560px;width:33px;height:54px;border-top:1px solid #6e7878;border-left:1px solid #6e7878;border-right:1px solid #a8b4b8;border-bottom:1px solid #a8b4b8;"></div>
<div class="a" style="left:61px;top:561px;width:31px;height:52px;background:#3380ff;"></div>
<div class="a" style="box-sizing:border-box;left:57px;top:617px;width:39px;height:60px;border-top:1px solid #a8a8a8;border-left:1px solid #8e8e8e;border-right:1px solid #b4b4b4;border-bottom:1px solid #b4b4b4;"></div>
<div class="a" style="box-sizing:border-box;left:58px;top:618px;width:37px;height:58px;border-top:1px solid #969696;border-left:1px solid #808080;border-right:1px solid #b4b4b4;border-bottom:1px solid #b8b8b8;"></div>
<div class="a" style="box-sizing:border-box;left:59px;top:619px;width:35px;height:56px;border-top:1px solid #828282;border-left:1px solid #767878;border-right:1px solid #b2b4b4;border-bottom:1px solid #b4b4b4;"></div>
<div class="a" style="box-sizing:border-box;left:60px;top:620px;width:33px;height:54px;border-top:1px solid #6e7878;border-left:1px solid #6e7878;border-right:1px solid #a8b4b8;border-bottom:1px solid #a8b4b8;"></div>
<div class="a" style="left:61px;top:621px;width:31px;height:52px;background:#3333ff;"></div>
<div class="a" style="box-sizing:border-box;left:57px;top:677px;width:39px;height:60px;border-top:1px solid #a8a8a8;border-left:1px solid #8e8e8e;border-right:1px solid #b4b4b4;border-bottom:1px solid #b4b4b4;"></div>
<div class="a" style="box-sizing:border-box;left:58px;top:678px;width:37px;height:58px;border-top:1px solid #969696;border-left:1px solid #808080;border-right:1px solid #b4b4b4;border-bottom:1px solid #b8b8b8;"></div>
<div class="a" style="box-sizing:border-box;left:59px;top:679px;width:35px;height:56px;border-top:1px solid #828282;border-left:1px solid #767878;border-right:1px solid #b2b4b4;border-bottom:1px solid #b4b4b4;"></div>
<div class="a" style="box-sizing:border-box;left:60px;top:680px;width:33px;height:54px;border-top:1px solid #6e7878;border-left:1px solid #6e7878;border-right:1px solid #a8b4b8;border-bottom:1px solid #a8b4b8;"></div>
<div class="a" style="left:61px;top:681px;width:31px;height:52px;background:#333380;"></div>
<div class="a" style="box-sizing:border-box;left:57px;top:737px;width:39px;height:60px;border-top:1px solid #a8a8a8;border-left:1px solid #8e8e8e;border-right:1px solid #b4b4b4;border-bottom:1px solid #b4b4b4;"></div>
<div class="a" style="box-sizing:border-box;left:58px;top:738px;width:37px;height:58px;border-top:1px solid #969696;border-left:1px solid #808080;border-right:1px solid #b4b4b4;border-bottom:1px solid #b8b8b8;"></div>
<div class="a" style="box-sizing:border-box;left:59px;top:739px;width:35px;height:56px;border-top:1px solid #828282;border-left:1px solid #767878;border-right:1px solid #b2b4b4;border-bottom:1px solid #b4b4b4;"></div>
<div class="a" style="box-sizing:border-box;left:60px;top:740px;width:33px;height:54px;border-top:1px solid #6e7878;border-left:1px solid #6e7878;border-right:1px solid #a8b4b8;border-bottom:1px solid #a8b4b8;"></div>
<div class="a" style="left:61px;top:741px;width:31px;height:52px;background:#333333;"></div>
<div class="t" style="left:8px;top:191px;">%100</div>
<div class="t" style="left:19px;top:485px;">%50</div>
<div class="t" style="left:14px;top:727px;">%10</div>
<div class="t" style="left:-29.6px;top:353.5px;letter-spacing:0.2px;transform:rotate(-90deg);transform-origin:center;">Output Level (%)</div>
<div class="t" style="left:-30.6px;top:611.5px;letter-spacing:0.2px;transform:rotate(-90deg);transform-origin:center;">Output Level (%)</div>
</body></html>
